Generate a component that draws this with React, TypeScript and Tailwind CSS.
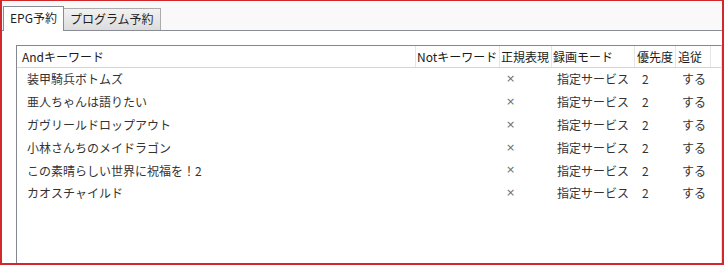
const ROWS = [
  '装甲騎兵ボトムズ',
  '亜人ちゃんは語りたい',
  'ガヴリールドロップアウト',
  '小林さんちのメイドラゴン',
  'この素晴らしい世界に祝福を！2',
  'カオスチャイルド',
]

export default function App() {
  return (
    <div className="w-[724px] h-[265px] flex flex-col overflow-hidden border-t border-x-2 border-b-2 border-[#d0282b] bg-[#f9f9f9] font-['Noto_Sans_CJK_JP',sans-serif] text-[12px] text-[#1f1f1f]">
      {/* Tab strip */}
      <div className="h-[30px] flex items-end border-b border-[#898c95] pl-px shrink-0">
        <div className="relative z-10 h-[25px] -mb-px px-[6px] pt-[3px] bg-white border-x border-t border-[#898c95] leading-[16px]">
          EPG予約
        </div>
        <div className="h-[22px] px-[6px] pt-[2px] border-r border-t border-[#acacac] bg-gradient-to-b from-[#f2f2f2] to-[#dcdcdc] leading-[16px]">
          プログラム予約
        </div>
      </div>

      {/* Panel */}
      <div className="flex-1 bg-white pt-[14px] pl-[14px]">
        <div className="h-full border-l border-t border-r border-[#828790] border-r-[#e3e3e3] flex flex-col">
          {/* Header */}
          <div className="h-[22px] flex border-b border-[#d5d5d5] leading-[21px] text-[#1a1a1a]">
            <div className="w-[399px] pl-[5px] border-r border-[#e5e5e5]">Andキーワード</div>
            <div className="w-[84px] pl-px border-r border-[#e5e5e5]">Notキーワード</div>
            <div className="w-[52px] pl-px border-r border-[#e5e5e5] whitespace-nowrap overflow-hidden">正規表現</div>
            <div className="w-[83px] pl-px border-r border-[#e5e5e5]">録画モード</div>
            <div className="w-[41px] pl-[2px] border-r border-[#e5e5e5]">優先度</div>
            <div className="w-[35px] pl-[2px] border-r border-[#e5e5e5]">追従</div>
            <div className="flex-1" />
          </div>

          {/* Rows */}
          {ROWS.map(title => (
            <div key={title} className="h-[22.8px] flex items-center text-[#333]">
              <div className="w-[399px] pl-[10px]">{title}</div>
              <div className="w-[84px]" />
              <div className="w-[52px] pl-[6px] text-[#6b6b6b] font-['DejaVu_Sans',sans-serif] text-[11px]">×</div>
              <div className="w-[83px] pl-[5px]">指定サービス</div>
              <div className="w-[41px] pl-[7px]">2</div>
              <div className="w-[35px] pl-[6px]">する</div>
            </div>
          ))}
        </div>
      </div>
    </div>
  )
}
